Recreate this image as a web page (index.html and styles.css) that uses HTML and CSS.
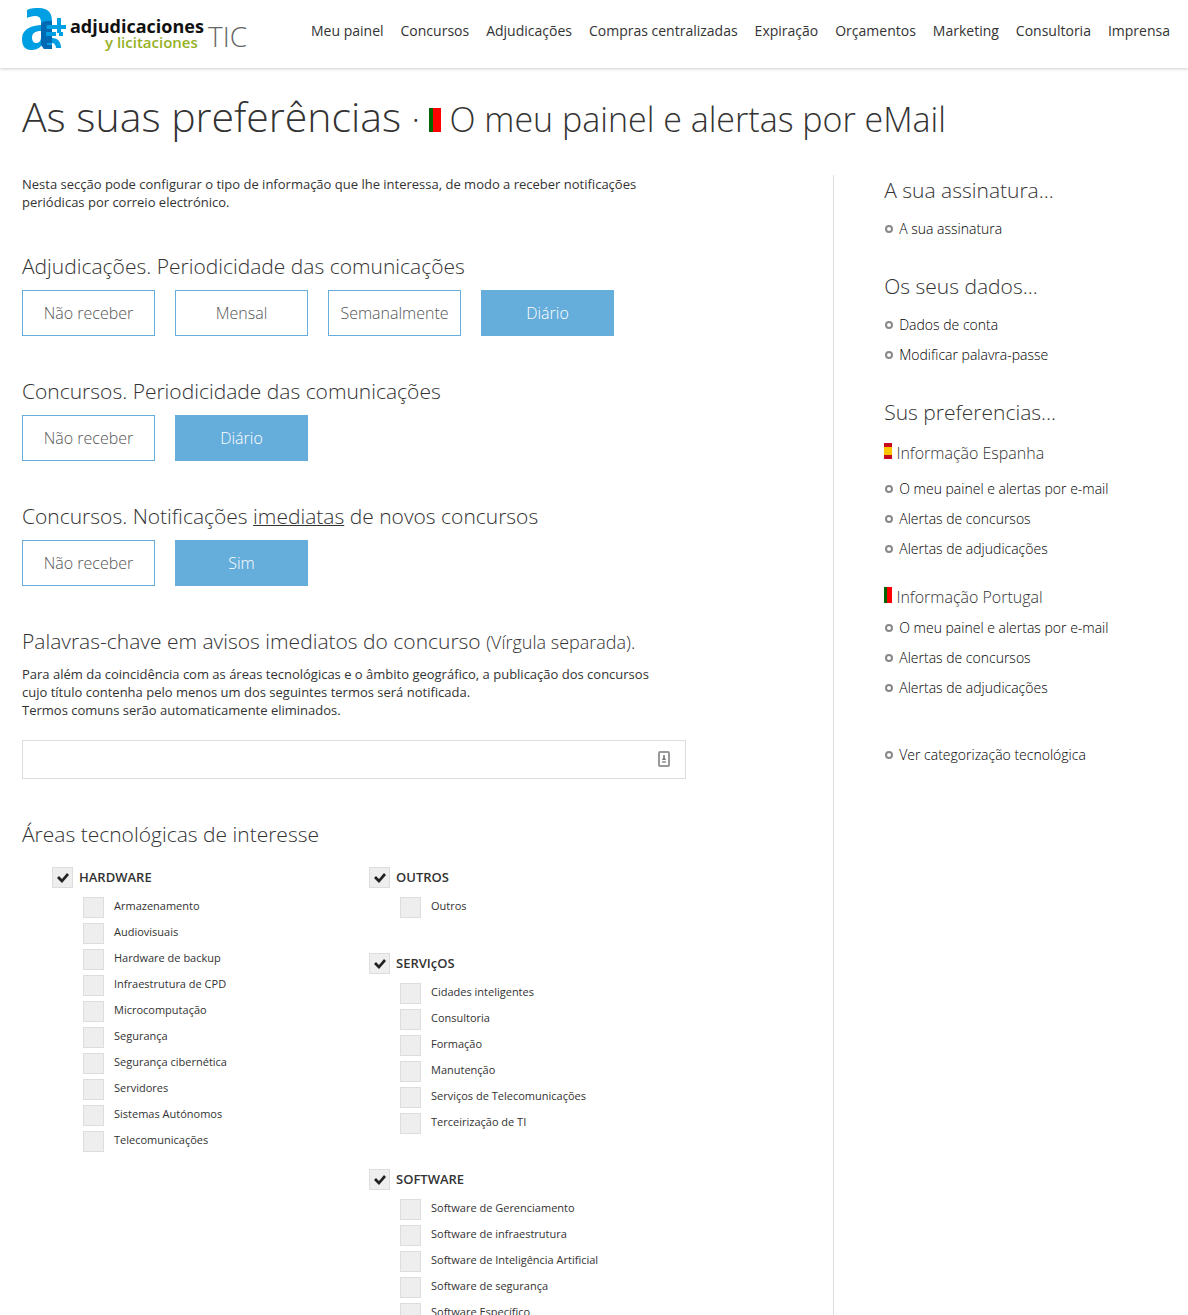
FILE: index.html
```html
<!DOCTYPE html>
<html lang="pt">
<head>
  <meta charset="UTF-8">
  <meta name="viewport" content="width=device-width, initial-scale=1.0">
  <title>As suas preferências</title>
  <link rel="stylesheet" href="styles.css">
</head>
<body>

  <header class="header">
    <a href="#" class="logo" aria-label="adjudicaciones y licitaciones TIC">
      <svg width="230" height="48" viewBox="0 0 230 48">
        <path fill="#009fe3" fill-rule="evenodd" d="M5 2 C9 0 13 0 17 0 C26 0 30 5 30 13 V41 H22 L20 37 C17 41 13 42 9 42 C3 42 0 38 0 31 C0 22 7 18 19 17 V14 C19 10 17 8 13 8 C10 8 7 9 5 10 Z M19 23 C13 23 10 25 10 30 C10 33 12 35 14 35 C17 35 19 33 19 29 Z"/>
        <path fill="#009fe3" d="M30 17 H35 V10 H39 V17 H44 V21 H39 V25 H35 V21 H30 Z M30 24 H34 V28 H30 Z M37 24 H41 V28 H37 Z M30 30 C36 30 39 34 39 40 H34 C34 37 32 35 30 35 Z"/>
        <path fill="#0069b4" d="M19 17 C19 14 22 13 26 13 H30 V17 H26 C24 17 24 19 25 21 H30 V24 H24 V28 H30 V35 H25 V37 H30 V41 H22 L19 37 Z"/>
        <text class="logo-name" x="48" y="25">adjudicaciones</text>
        <text class="logo-sub" x="83" y="40">y licitaciones</text>
        <text class="logo-tic" x="186" y="39">TIC</text>
      </svg>
    </a>
    <nav class="nav">
      <a href="#">Meu painel</a>
      <a href="#">Concursos</a>
      <a href="#">Adjudicações</a>
      <a href="#">Compras centralizadas</a>
      <a href="#">Expiração</a>
      <a href="#">Orçamentos</a>
      <a href="#">Marketing</a>
      <a href="#">Consultoria</a>
      <a href="#">Imprensa</a>
    </nav>
  </header>

  <h1 class="title">As suas preferências <small>· <span class="flag flag-pt flag-big"></span> O meu painel e alertas por eMail</small></h1>

  <div class="page">
    <main class="content">
      <form class="form" id="preferencesForm">
        <p class="text">Nesta secção pode configurar o tipo de informação que lhe interessa, de modo a receber notificações periódicas por correio electrónico.</p>

        <section class="block">
          <h2>Adjudicações. Periodicidade das comunicações</h2>
          <div class="options">
            <label class="option"><input type="radio" name="awards" value="none"><span>Não receber</span></label>
            <label class="option"><input type="radio" name="awards" value="month"><span>Mensal</span></label>
            <label class="option"><input type="radio" name="awards" value="week"><span>Semanalmente</span></label>
            <label class="option"><input type="radio" name="awards" value="day" checked><span>Diário</span></label>
          </div>
        </section>

        <section class="block">
          <h2>Concursos. Periodicidade das comunicações</h2>
          <div class="options">
            <label class="option"><input type="radio" name="tenders" value="none"><span>Não receber</span></label>
            <label class="option"><input type="radio" name="tenders" value="day" checked><span>Diário</span></label>
          </div>
        </section>

        <section class="block">
          <h2>Concursos. Notificações <u>imediatas</u> de novos concursos</h2>
          <div class="options">
            <label class="option"><input type="radio" name="instant" value="no"><span>Não receber</span></label>
            <label class="option"><input type="radio" name="instant" value="yes" checked><span>Sim</span></label>
          </div>
        </section>

        <section class="block">
          <h2><label for="keywords">Palavras-chave em avisos imediatos do concurso <small>(Vírgula separada).</small></label></h2>
          <p class="text">Para além da coincidência com as áreas tecnológicas e o âmbito geográfico, a publicação dos concursos cujo título contenha pelo menos um dos seguintes termos será notificada.<br>Termos comuns serão automaticamente eliminados.</p>
          <div class="keywords">
            <input type="text" id="keywords" name="keywords">
            <svg class="keywords-icon" width="12" height="16" viewBox="0 0 12 16">
              <rect x="1" y="1" width="10" height="14" rx="1" fill="#fff" stroke="#999" stroke-width="2"/>
              <circle cx="6" cy="5" r="1" fill="#777"/>
              <path d="M4 9 L6 5 L8 9 Z" fill="#777"/>
              <path d="M4 11 H8" stroke="#aaa" stroke-width="2"/>
            </svg>
          </div>
        </section>

        <section class="block">
          <h2>Áreas tecnológicas de interesse</h2>
          <div class="areas">
            <div class="areas-col">
              <div class="area">
                <label class="area-title"><input type="checkbox" checked>HARDWARE</label>
                <ul>
                  <li><label><input type="checkbox"><span>Armazenamento</span></label></li>
                  <li><label><input type="checkbox"><span>Audiovisuais</span></label></li>
                  <li><label><input type="checkbox"><span>Hardware de backup</span></label></li>
                  <li><label><input type="checkbox"><span>Infraestrutura de CPD</span></label></li>
                  <li><label><input type="checkbox"><span>Microcomputação</span></label></li>
                  <li><label><input type="checkbox"><span>Segurança</span></label></li>
                  <li><label><input type="checkbox"><span>Segurança cibernética</span></label></li>
                  <li><label><input type="checkbox"><span>Servidores</span></label></li>
                  <li><label><input type="checkbox"><span>Sistemas Autónomos</span></label></li>
                  <li><label><input type="checkbox"><span>Telecomunicações</span></label></li>
                </ul>
              </div>
            </div>
            <div class="areas-col">
              <div class="area">
                <label class="area-title"><input type="checkbox" checked>OUTROS</label>
                <ul>
                  <li><label><input type="checkbox"><span>Outros</span></label></li>
                </ul>
              </div>
              <div class="area">
                <label class="area-title"><input type="checkbox" checked>SERVIçOS</label>
                <ul>
                  <li><label><input type="checkbox"><span>Cidades inteligentes</span></label></li>
                  <li><label><input type="checkbox"><span>Consultoria</span></label></li>
                  <li><label><input type="checkbox"><span>Formação</span></label></li>
                  <li><label><input type="checkbox"><span>Manutenção</span></label></li>
                  <li><label><input type="checkbox"><span>Serviços de Telecomunicações</span></label></li>
                  <li><label><input type="checkbox"><span>Terceirização de TI</span></label></li>
                </ul>
              </div>
              <div class="area">
                <label class="area-title"><input type="checkbox" checked>SOFTWARE</label>
                <ul>
                  <li><label><input type="checkbox"><span>Software de Gerenciamento</span></label></li>
                  <li><label><input type="checkbox"><span>Software de infraestrutura</span></label></li>
                  <li><label><input type="checkbox"><span>Software de Inteligência Artificial</span></label></li>
                  <li><label><input type="checkbox"><span>Software de segurança</span></label></li>
                  <li><label><input type="checkbox"><span>Software Específico</span></label></li>
                </ul>
              </div>
            </div>
          </div>
        </section>
      </form>
    </main>

    <aside class="sidebar">
      <h3>A sua assinatura...</h3>
      <ul>
        <li><a href="#">A sua assinatura</a></li>
      </ul>

      <h3>Os seus dados...</h3>
      <ul>
        <li><a href="#">Dados de conta</a></li>
        <li><a href="#">Modificar palavra-passe</a></li>
      </ul>

      <h3>Sus preferencias...</h3>
      <h4><span class="flag flag-es"></span> Informação Espanha</h4>
      <ul>
        <li><a href="#">O meu painel e alertas por e-mail</a></li>
        <li><a href="#">Alertas de concursos</a></li>
        <li><a href="#">Alertas de adjudicações</a></li>
      </ul>
      <h4 class="country-next"><span class="flag flag-pt"></span> Informação Portugal</h4>
      <ul class="list-tight">
        <li><a href="#">O meu painel e alertas por e-mail</a></li>
        <li><a href="#">Alertas de concursos</a></li>
        <li><a href="#">Alertas de adjudicações</a></li>
      </ul>

      <ul class="list-last">
        <li><a href="#">Ver categorização tecnológica</a></li>
      </ul>
    </aside>
  </div>

</body>
</html>
```
FILE: styles.css
```css
*, *::before {
  box-sizing: border-box;
}

body {
  margin: 0;
  font-family: 'Open Sans', sans-serif;
  font-size: 13px;
  line-height: 18px;
  color: #333;
  background: #fff;
}

h1, h2, h3, h4, p, ul {
  margin: 0;
  padding: 0;
}

h1, h2, h3, h4 {
  font-weight: 300;
}

ul {
  list-style: none;
}

/* header */
.header {
  display: flex;
  align-items: center;
  justify-content: space-between;
  height: 68px;
  padding: 0 18px 6px 22px;
  box-shadow: 0 1px 3px rgba(0,0,0,0.2);
}

.logo {
  display: block;
  height: 46px;
}

.logo-name {
  font: bold 18px 'Open Sans', sans-serif;
  fill: #111;
}

.logo-sub {
  font: 600 15px 'Open Sans', sans-serif;
  fill: #95b11f;
}

.logo-tic {
  font: 28px 'Open Sans', sans-serif;
  font-weight: 300;
  fill: #666;
}

.nav {
  display: flex;
  gap: 17px;
}

.nav a {
  font-size: 14px;
  color: #333;
  text-decoration: none;
  white-space: nowrap;
}

/* title */
.title {
  padding: 18px 22px 0;
  margin-bottom: 29px;
  font-size: 41px;
  line-height: 60px;
}

.title small {
  font-size: 34px;
  line-height: 40px;
}

.flag {
  display: inline-block;
  width: 8px;
  height: 16px;
}

.flag-big {
  width: 12px;
  height: 24px;
}

.flag-pt {
  background: linear-gradient(to right, #006600 35%, #ff0000 35%);
}

.flag-es {
  background: linear-gradient(#c60b1e 25%, #ffc400 25%, #ffc400 75%, #c60b1e 75%);
}

/* columns */
.page {
  display: grid;
  grid-template-columns: 71% 1fr;
  padding: 0 22px;
}

.content {
  border-right: 1px solid #ddd;
}

.form {
  max-width: 664px;
}

.text {
  max-width: 650px;
}

.block {
  margin-top: 40px;
}

.block h2 {
  margin-bottom: 9px;
  font-size: 21px;
  line-height: 30px;
}

.block h2 small {
  font-size: 18px;
  line-height: 20px;
}

.block u {
  text-decoration-thickness: 1px;
}

/* radio buttons */
.options {
  display: flex;
  gap: 20px;
}

.option {
  position: relative;
  width: 133px;
  cursor: pointer;
}

.option input {
  position: absolute;
  opacity: 0;
}

.option span {
  display: block;
  border: 1px solid #65addb;
  font-size: 16px;
  font-weight: 300;
  line-height: 44px;
  text-align: center;
  color: #555;
}

.option input:checked + span {
  background: #65addb;
  color: #fff;
}

/* keywords */
.keywords {
  position: relative;
  margin-top: 21px;
}

.keywords input {
  display: block;
  width: 100%;
  height: 39px;
  padding: 0 40px 0 10px;
  border: 1px solid #ddd;
  font: inherit;
  outline: none;
}

.keywords-icon {
  position: absolute;
  top: 11px;
  right: 16px;
}

/* technology areas */
.areas {
  display: grid;
  grid-template-columns: 1fr 1fr;
  padding: 9px 0 0 30px;
}

.area {
  margin-bottom: 30px;
}

.area-title {
  display: flex;
  align-items: center;
  gap: 6px;
  font-weight: 600;
  line-height: 21px;
}

.area ul {
  padding: 9px 0 0 31px;
}

.area li {
  height: 26px;
}

.area li label {
  display: flex;
  gap: 10px;
  font-size: 11px;
}

.area input {
  appearance: none;
  width: 21px;
  height: 21px;
  margin: 0;
  border: 1px solid #ddd;
  background: #eee;
}

.area input:checked {
  background: #eee url("data:image/svg+xml,%3Csvg xmlns='http://www.w3.org/2000/svg' viewBox='0 0 14 12'%3E%3Cpath d='M1 6 L3 4 L6 7 L11 1 L13 3 L6 11 Z' fill='%23222'/%3E%3C/svg%3E") center / 14px 12px no-repeat;
}

/* sidebar */
.sidebar {
  padding-left: 50px;
}

.sidebar h3 {
  font-size: 21px;
  line-height: 30px;
}

.sidebar h4 {
  margin-top: 14px;
  font-size: 16px;
  line-height: 24px;
}

.sidebar ul {
  margin-top: 9px;
}

.sidebar ul + h3 {
  margin-top: 27px;
}

.sidebar .country-next {
  margin-top: 21px;
}

.sidebar .list-tight {
  margin-top: 4px;
}

.sidebar .list-last {
  margin-top: 37px;
}

.sidebar li {
  display: flex;
  align-items: center;
  gap: 6px;
  padding-left: 1px;
  line-height: 30px;
}

.sidebar li::before {
  content: "";
  width: 8px;
  height: 8px;
  border: 2px solid #888;
  border-radius: 50%;
}

.sidebar li a {
  font-size: 14px;
  font-weight: 300;
  color: #000;
  text-decoration: none;
}
```
